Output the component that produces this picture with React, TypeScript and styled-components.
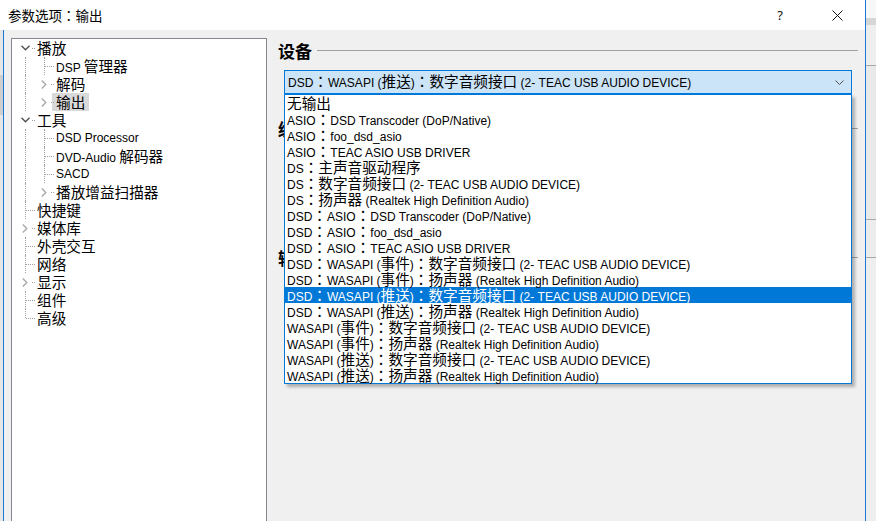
import styled, { createGlobalStyle } from "styled-components"

const GlobalStyle = createGlobalStyle`
  html, body {
    margin: 0;
    padding: 0;
  }
  body {
    font-family: "Liberation Sans", "Noto Sans CJK SC", sans-serif;
    font-size: 12px;
    color: #000;
    background: #f0f0f0;
  }
`

// CJK runs are drawn a size up, the way the YaHei fallback shows next to Segoe UI
const HAN = /([\u2e80-\u9fff\uf900-\ufaff\uff00-\uffef]+)/

const Han = styled.span<{ $scale?: number }>`
  font-family: "Noto Sans CJK SC", sans-serif;
  font-size: ${(p) => p.$scale ?? 1.22}em;
`

// the SC face sits its full-width colon low-left; the TC one centres it like YaHei
const Colon = styled.span`
  font-family: "Noto Sans CJK TC", sans-serif;
`

function Mixed({ text, scale }: { text: string; scale?: number }) {
  return (
    <>
      {text.split(HAN).map((part, i) =>
        i % 2 ? (
          <Han key={i} $scale={scale}>
            {part.split(/(：)/).map((bit, j) => (j % 2 ? <Colon key={j}>{bit}</Colon> : bit))}
          </Han>
        ) : (
          part
        )
      )}
    </>
  )
}

type Line = "full" | "top" | "bottom"

interface Guide {
  v: Line
  h?: boolean
  exp?: "open" | "closed"
}

interface TreeItem {
  label: string
  guides: Guide[]
  selected?: boolean
}

const TREE: TreeItem[] = [
  { label: "播放", guides: [{ v: "bottom", h: true, exp: "open" }] },
  { label: "DSP 管理器", guides: [{ v: "full" }, { v: "full", h: true }] },
  { label: "解码", guides: [{ v: "full" }, { v: "full", h: true, exp: "closed" }] },
  { label: "输出", guides: [{ v: "full" }, { v: "top", h: true, exp: "closed" }], selected: true },
  { label: "工具", guides: [{ v: "full", h: true, exp: "open" }] },
  { label: "DSD Processor", guides: [{ v: "full" }, { v: "full", h: true }] },
  { label: "DVD-Audio 解码器", guides: [{ v: "full" }, { v: "full", h: true }] },
  { label: "SACD", guides: [{ v: "full" }, { v: "full", h: true }] },
  { label: "播放增益扫描器", guides: [{ v: "full" }, { v: "top", h: true, exp: "closed" }] },
  { label: "快捷键", guides: [{ v: "full", h: true }] },
  { label: "媒体库", guides: [{ v: "full", h: true, exp: "closed" }] },
  { label: "外壳交互", guides: [{ v: "full", h: true }] },
  { label: "网络", guides: [{ v: "full", h: true }] },
  { label: "显示", guides: [{ v: "full", h: true, exp: "closed" }] },
  { label: "组件", guides: [{ v: "full", h: true }] },
  { label: "高级", guides: [{ v: "top", h: true }] },
]

const DEVICES = [
  "无输出",
  "ASIO：DSD Transcoder (DoP/Native)",
  "ASIO：foo_dsd_asio",
  "ASIO：TEAC ASIO USB DRIVER",
  "DS：主声音驱动程序",
  "DS：数字音频接口 (2- TEAC USB AUDIO DEVICE)",
  "DS：扬声器 (Realtek High Definition Audio)",
  "DSD：ASIO：DSD Transcoder (DoP/Native)",
  "DSD：ASIO：foo_dsd_asio",
  "DSD：ASIO：TEAC ASIO USB DRIVER",
  "DSD：WASAPI (事件)：数字音频接口 (2- TEAC USB AUDIO DEVICE)",
  "DSD：WASAPI (事件)：扬声器 (Realtek High Definition Audio)",
  "DSD：WASAPI (推送)：数字音频接口 (2- TEAC USB AUDIO DEVICE)",
  "DSD：WASAPI (推送)：扬声器 (Realtek High Definition Audio)",
  "WASAPI (事件)：数字音频接口 (2- TEAC USB AUDIO DEVICE)",
  "WASAPI (事件)：扬声器 (Realtek High Definition Audio)",
  "WASAPI (推送)：数字音频接口 (2- TEAC USB AUDIO DEVICE)",
  "WASAPI (推送)：扬声器 (Realtek High Definition Audio)",
]

const SELECTED_DEVICE = 12

function ChevronOpen() {
  return (
    <svg width="9" height="6" viewBox="0 0 9 6">
      <polyline points="0.5,0.8 4.5,4.8 8.5,0.8" fill="none" stroke="#4d4d4d" strokeWidth="1.3" />
    </svg>
  )
}

function ChevronClosed() {
  return (
    <svg width="6" height="9" viewBox="0 0 6 9">
      <polyline points="0.8,0.5 4.8,4.5 0.8,8.5" fill="none" stroke="#a6a6a6" strokeWidth="1.3" />
    </svg>
  )
}

export default function App() {
  return (
    <>
      <GlobalStyle />
      <Screen>
        <LeftEdge>
          <EdgeBand $h={30} $bg="#ffffff" />
          <EdgeBand $h={45} $bg="#e6e6e6" />
          <EdgeBand $h={40} $bg="#cfcfcf" />
          <EdgeBand $h={406} $bg="#e6e6e6" />
        </LeftEdge>

        <Dialog>
          <TitleBar>
            <Title>
              <Mixed text="参数选项：输出" scale={1} />
            </Title>
            <TitleButton $w={58}>?</TitleButton>
            <TitleButton $w={56}>
              <svg width="11" height="11" viewBox="0 0 11 11">
                <path d="M0.5 0.5 L10.5 10.5 M10.5 0.5 L0.5 10.5" stroke="#111" strokeWidth="1" />
              </svg>
            </TitleButton>
          </TitleBar>

          <Body>
            <Tree>
              {TREE.map((item) => (
                <TreeRow key={item.label}>
                  {item.guides.map((g, i) => (
                    <GuideCell key={i} $v={g.v} $h={!!g.h}>
                      {g.exp && (
                        <Expander>{g.exp === "open" ? <ChevronOpen /> : <ChevronClosed />}</Expander>
                      )}
                    </GuideCell>
                  ))}
                  <TreeLabel $selected={!!item.selected}>
                    <Mixed text={item.label} />
                  </TreeLabel>
                </TreeRow>
              ))}
            </Tree>

            <Options>
              <Group $h={78}>
                <GroupHead>
                  <span>设备</span>
                  <GroupRule />
                </GroupHead>
                <ComboWrap>
                  <Combo>
                    <ComboText>
                      <Mixed text={DEVICES[SELECTED_DEVICE]} />
                    </ComboText>
                    <svg width="9" height="5" viewBox="0 0 9 5">
                      <polyline points="0.5,0.5 4.5,4.5 8.5,0.5" fill="none" stroke="#505050" strokeWidth="1" />
                    </svg>
                  </Combo>
                  <DropList>
                    {DEVICES.map((d, i) => (
                      <DropItem key={d} $selected={i === SELECTED_DEVICE}>
                        <Mixed text={d} />
                      </DropItem>
                    ))}
                  </DropList>
                </ComboWrap>
              </Group>

              <Group $h={129}>
                <GroupHead>
                  <span>缓冲长度</span>
                  <GroupRule />
                </GroupHead>
              </Group>

              <Group $h={100}>
                <GroupHead>
                  <span>输出格式</span>
                  <GroupRule />
                </GroupHead>
              </Group>
            </Options>
          </Body>
        </Dialog>

        <RightEdge>
          <EdgeBand $h={18} $bg="#f7f7f7" />
          <EdgeBand $h={7} $bg="#d6d6d6" />
          <EdgeBand $h={41} $bg="#eeeeee" $line />
          <EdgeBand $h={154} $bg="#e9e9e9" $line />
          <EdgeBand $h={38} $bg="#ececec" $line />
          <EdgeBand $h={263} $bg="#eeeeee" />
        </RightEdge>
      </Screen>
    </>
  )
}

const Screen = styled.div`
  display: flex;
  width: 876px;
  height: 521px;
  overflow: hidden;
`

const LeftEdge = styled.div`
  width: 3px;
  display: flex;
  flex-direction: column;
`

const RightEdge = styled.div`
  width: 10px;
  display: flex;
  flex-direction: column;
`

const EdgeBand = styled.div<{ $h: number; $bg: string; $line?: boolean }>`
  flex: none;
  height: ${(p) => p.$h}px;
  background: ${(p) => p.$bg};
  box-sizing: border-box;
  border-bottom: ${(p) => (p.$line ? "1px solid #a8a8a8" : "none")};
`

const Dialog = styled.div`
  width: 863px;
  box-sizing: border-box;
  border-right: 1px solid #1b78d0;
  display: flex;
  flex-direction: column;
`

const TitleBar = styled.div`
  height: 30px;
  flex: none;
  background: #fff;
  display: flex;
  align-items: center;
  padding-left: 5px;
`

const Title = styled.div`
  flex: 1;
  font-family: "Noto Sans CJK SC", sans-serif;
  font-size: 13.5px;
`

const TitleButton = styled.div<{ $w: number }>`
  width: ${(p) => p.$w}px;
  height: 30px;
  display: flex;
  align-items: center;
  justify-content: center;
  font-family: "Noto Sans", sans-serif;
  font-size: 13px;
  color: #111;
`

const Body = styled.div`
  flex: 1;
  display: flex;
  background: #f0f0f0;
  border-left: 1px solid #1b78d0;
  padding: 8px 0 0 7px;
  min-height: 0;
`

const Tree = styled.div`
  width: 256px;
  flex: none;
  box-sizing: border-box;
  border: 1px solid #828790;
  background: #fff;
  margin-bottom: -4px;
`

const TreeRow = styled.div`
  display: flex;
  height: 18px;
  padding-left: 4px;
`

const GuideCell = styled.div<{ $v: Line; $h: boolean }>`
  position: relative;
  width: 19px;
  flex: none;

  &::before {
    content: "";
    position: absolute;
    left: 9px;
    top: ${(p) => (p.$v === "bottom" ? "9px" : "0")};
    bottom: ${(p) => (p.$v === "top" ? "9px" : "0")};
    border-left: 1px dotted #a0a0a0;
  }

  &::after {
    content: "";
    display: ${(p) => (p.$h ? "block" : "none")};
    position: absolute;
    left: 10px;
    right: 0;
    top: 9px;
    border-top: 1px dotted #a0a0a0;
  }
`

const Expander = styled.div`
  position: absolute;
  z-index: 1;
  left: 3px;
  top: 0;
  width: 12px;
  height: 18px;
  background: #fff;
  display: flex;
  align-items: center;
  justify-content: center;
`

const TreeLabel = styled.div<{ $selected: boolean }>`
  margin-left: -2px;
  padding: 0 4px;
  line-height: 18px;
  height: 18px;
  white-space: nowrap;
  background: ${(p) => (p.$selected ? "#d9d9d9" : "transparent")};
`

const Options = styled.div`
  flex: 1;
  min-width: 0;
  display: flex;
  flex-direction: column;
  padding: 2px 7px 0 11px;
`

const Group = styled.section<{ $h: number }>`
  height: ${(p) => p.$h}px;
  flex: none;
  display: flex;
  flex-direction: column;
`

const GroupHead = styled.div`
  display: flex;
  align-items: center;
  height: 20px;
  font-family: "Noto Sans CJK SC", sans-serif;
  font-size: 17px;
  font-weight: 700;
  white-space: nowrap;
`

const GroupRule = styled.div`
  flex: 1;
  height: 1px;
  background: #a0a0a0;
  margin-left: 5px;
`

const ComboWrap = styled.div`
  position: relative;
  margin: 10px 6px 0 6px;
`

const Combo = styled.div`
  height: 24px;
  box-sizing: border-box;
  border: 1px solid #0078d7;
  background: #cce4f7;
  display: flex;
  align-items: center;
  padding: 0 7px 0 3px;
`

const ComboText = styled.div`
  flex: 1;
  white-space: nowrap;
  line-height: 20px;
`

const DropList = styled.div`
  position: absolute;
  z-index: 5;
  top: 100%;
  left: 0;
  right: 0;
  background: #fff;
  border: 1px solid #0078d7;
  box-shadow: 3px 3px 3px rgba(0, 0, 0, 0.28);
`

const DropItem = styled.div<{ $selected: boolean }>`
  height: 16px;
  line-height: 15px;
  padding-left: 2px;
  white-space: nowrap;
  background: ${(p) => (p.$selected ? "#0078d7" : "transparent")};
  color: ${(p) => (p.$selected ? "#fff" : "#000")};
`
